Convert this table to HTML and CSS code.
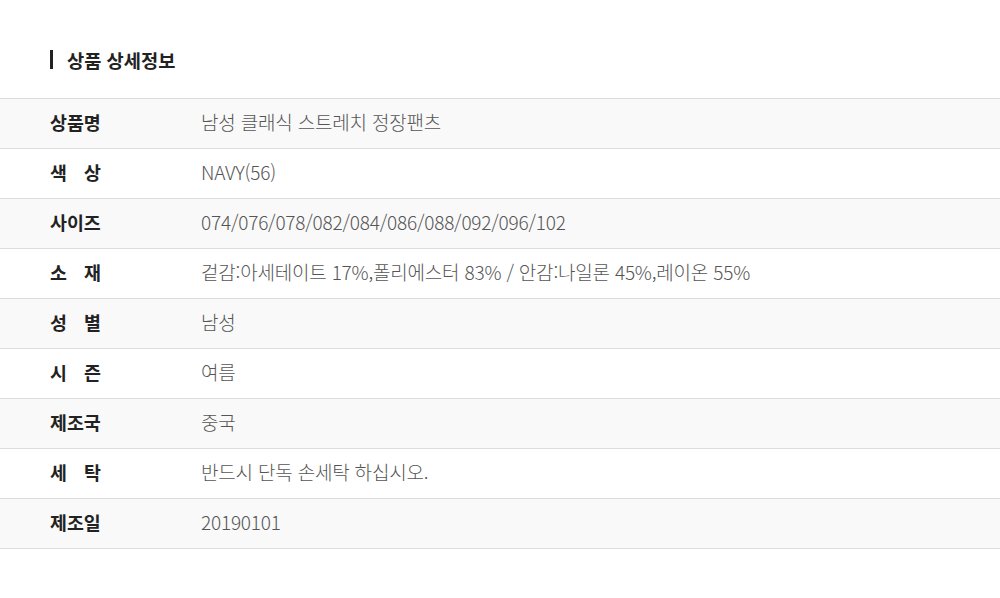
FILE: index.html
```html
<!DOCTYPE html>
<html lang="ko">
<head>
<meta charset="utf-8">
<link rel="stylesheet" href="styles.css">
</head>
<body>
<div class="page">
  <h2 class="title">상품 상세정보</h2>
  <div class="table">
    <div class="row alt"><span class="label">상품명</span><span class="value">남성 클래식 스트레치 정장팬츠</span></div>
    <div class="row"><span class="label">색 상</span><span class="value">NAVY(56)</span></div>
    <div class="row alt"><span class="label">사이즈</span><span class="value">074/076/078/082/084/086/088/092/096/102</span></div>
    <div class="row"><span class="label">소 재</span><span class="value">겉감:아세테이트 17%,폴리에스터 83% / 안감:나일론 45%,레이온 55%</span></div>
    <div class="row alt"><span class="label">성 별</span><span class="value">남성</span></div>
    <div class="row"><span class="label">시 즌</span><span class="value">여름</span></div>
    <div class="row alt"><span class="label">제조국</span><span class="value">중국</span></div>
    <div class="row"><span class="label">세 탁</span><span class="value">반드시 단독 손세탁 하십시오.</span></div>
    <div class="row alt"><span class="label">제조일</span><span class="value">20190101</span></div>
  </div>
</div>
</body>
</html>
```
FILE: styles.css
```css
html, body {
  margin: 0;
  padding: 0;
  background: #fff;
}
body {
  font-family: "Noto Sans CJK KR", "Noto Sans", sans-serif;
}
.page {
  padding-top: 50px;
}
.title {
  margin: 0 0 0 50px;
  padding-left: 14px;
  border-left: 3px solid #222;
  height: 19px;
  line-height: 19px;
  font-size: 18.7px;
  font-weight: 700;
  color: #222;
}
.table {
  margin-top: 29px;
  border-top: 1px solid #ddd;
}
.row {
  box-sizing: border-box;
  display: flex;
  align-items: center;
  height: 50px;
  padding: 0 0 4px 50px;
  border-bottom: 1px solid #ddd;
}
.row.alt {
  background: #f9f9f9;
}
.label {
  width: 51px;
  flex: none;
  text-align: justify;
  text-align-last: justify;
  font-size: 18.4px;
  font-weight: 700;
  color: #222;
  margin-right: 100px;
}
.value {
  font-size: 19px;
  font-weight: 300;
  color: #555;
  letter-spacing: -0.2px;
}
```
